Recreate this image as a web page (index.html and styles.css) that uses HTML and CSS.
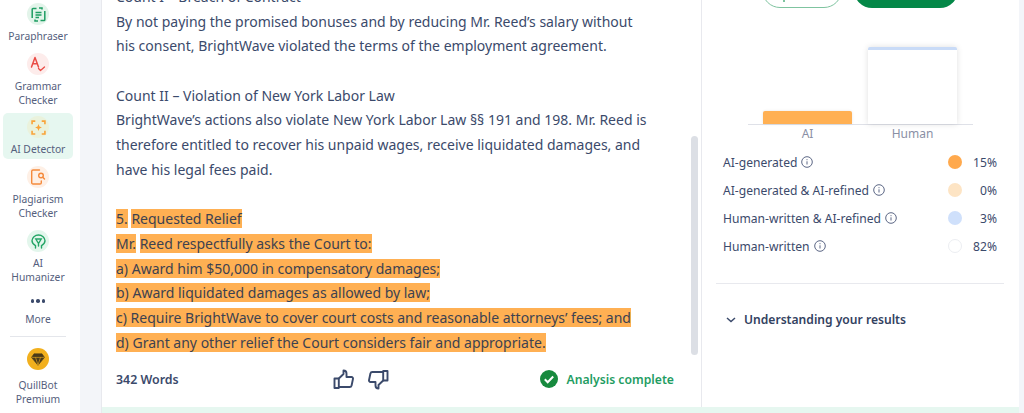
FILE: index.html
```html
<!DOCTYPE html>
<html>
<head>
    <title>AI Detector</title>
    <link rel="stylesheet" href="styles.css">
</head>
<body>
    <div class="app">
        <nav class="sidebar">
            <a class="nav-item first">
                <span class="nav-icon green">
                    <svg width="15" height="15" viewBox="0 0 15 15" fill="none" stroke="#1f9d63" stroke-width="1.500">
                        <path d="M5.500 1.500H2a.8.8 0 0 0-.8.8v8.700M9.500 13.500H13a.8.8 0 0 0 .8-.8V4"/>
                        <path d="M4 12.500v1.500h3M11 2.500V1H8"/>
                        <path d="M4.500 5.500h6M4.500 8h6M4.500 10.500h3.500" stroke-width="1.300"/>
                    </svg>
                </span>
                <span class="nav-label">Paraphraser</span>
            </a>
            <a class="nav-item">
                <span class="nav-icon red">
                    <svg width="16" height="16" viewBox="0 0 16 16" fill="none" stroke="#ea4c46" stroke-width="1.5" stroke-linecap="round" stroke-linejoin="round">
                        <path d="M1.5 11 5 1.5 8.500 11M2.800 7.800h4.400"/>
                        <path d="M8.500 12.500l2 2 4-3.500" stroke-width="1.300"/>
                    </svg>
                </span>
                <span class="nav-label">Grammar<br>Checker</span>
            </a>
            <a class="nav-item active">
                <span class="nav-icon amber">
                    <svg width="15" height="15" viewBox="0 0 14 14" fill="none" stroke="#f9a339" stroke-width="1.500">
                        <path d="M1 4V1h3M10 1h3v3M13 10v3h-3M4 13H1v-3"/>
                        <path d="M7 3.800 7.900 6.100 10.200 7 7.900 7.900 7 10.200 6.100 7.900 3.800 7 6.100 6.100Z" fill="#f9a339" stroke="none"/>
                    </svg>
                </span>
                <span class="nav-label">AI Detector</span>
            </a>
            <a class="nav-item">
                <span class="nav-icon orange">
                    <svg width="16" height="16" viewBox="0 0 16 16" fill="none" stroke="#f58a3c" stroke-width="1.4" stroke-linecap="round">
                        <path d="M9.500 1H3a1.300 1.300 0 0 0-1.300 1.300v11.400A1.300 1.300 0 0 0 3 15h7a1.300 1.300 0 0 0 1.300-1.300V12"/>
                        <circle cx="11" cy="6.500" r="2.300"/>
                        <path d="M12.800 8.300l1.700 1.700"/>
                    </svg>
                </span>
                <span class="nav-label">Plagiarism<br>Checker</span>
            </a>
            <a class="nav-item">
                <span class="nav-icon mint">
                    <svg width="15" height="15" viewBox="0 0 15 15" fill="none" stroke="#23a566" stroke-width="1.4" stroke-linecap="round">
                        <path d="M4.500 14v-2.300C2.500 10.500 1 8.800 1 6.800 1 3.500 4 1 7.500 1S14 3.500 14 6.800c0 2-1.500 3.700-3.500 4.900V14"/>
                        <path d="M4.800 5h5.400L7.500 9.500ZM7.500 9.500V12"/>
                    </svg>
                </span>
                <span class="nav-label">AI<br>Humanizer</span>
            </a>
            <a class="nav-item more">
                <span class="more-dots"><i></i><i></i><i></i></span>
                <span class="nav-label">More</span>
            </a>
            <div class="nav-divider"></div>
            <a class="nav-item premium">
                <span class="nav-icon gold">
                    <svg width="14" height="13" viewBox="0 0 14 13" fill="#4a3a1a" stroke="#4a3a1a" stroke-width=".6" stroke-linejoin="round">
                        <path d="M3 .8h8l2.500 3.600L7 12.300.5 4.400Z"/>
                        <path d="M.8 4.400h12.400M4.500 4.400 7 12M9.500 4.400 7 12" stroke="#f2b01e"/>
                    </svg>
                </span>
                <span class="nav-label">QuillBot<br>Premium</span>
            </a>
        </nav>

        <div class="main">
            <div class="card">
                <div class="card-body">
                    <section class="editor">
                        <div class="editor-text">
                            <p>Count I – Breach of Contract<br>
                            By not paying the promised bonuses and by reducing Mr. Reed’s salary without<br>
                            his consent, BrightWave violated the terms of the employment agreement.</p>
                            <p>Count II – Violation of New York Labor Law<br>
                            BrightWave’s actions also violate New York Labor Law §§ 191 and 198. Mr. Reed is<br>
                            therefore entitled to recover his unpaid wages, receive liquidated damages, and<br>
                            have his legal fees paid.</p>
                            <p class="flagged"><mark>5.</mark> <mark>Requested Relief</mark><br>
                            <mark>Mr.</mark> <mark>Reed respectfully asks the Court to:</mark><br>
                            <mark>a) Award him $50,000 in compensatory damages;</mark><br>
                            <mark>b) Award liquidated damages as allowed by law;</mark><br>
                            <mark>c) Require BrightWave to cover court costs and reasonable attorneys’ fees; and</mark><br>
                            <mark>d) Grant any other relief the Court considers fair and appropriate.</mark></p>
                        </div>
                        <div class="scroll-thumb"></div>
                        <div class="editor-footer">
                            <span class="word-count">342 Words</span>
                            <span class="feedback">
                                <svg width="21" height="21" viewBox="0 0 21 21" fill="none" stroke="#3b4a6b" stroke-width="1.900" stroke-linejoin="round">
                                    <path d="M1.500 9.500h4.300v9.500H1.500Z"/>
                                    <path d="M5.800 9.500 10.500 5V1.500c2 0 3 1.300 3 3v3.500h5a1.500 1.500 0 0 1 1.500 1.800l-1.400 6.700a2 2 0 0 1-2 1.500H5.800"/>
                                </svg>
                                <svg width="21" height="21" viewBox="0 0 21 21" fill="none" stroke="#3b4a6b" stroke-width="1.900" stroke-linejoin="round">
                                    <path d="M19.500 11.500h-4.300V2h4.300Z"/>
                                    <path d="M15.200 11.500 10.500 16v3.500c-2 0-3-1.300-3-3V13h-5A1.500 1.500 0 0 1 1 11.200L2.400 4.500a2 2 0 0 1 2-1.500h10.800"/>
                                </svg>
                            </span>
                            <span class="status">
                                <svg width="18" height="18" viewBox="0 0 18 18">
                                    <circle cx="9" cy="9" r="9" fill="#178a3e"/>
                                    <path d="M4.800 9.300l2.900 2.900 5.500-5.700" fill="none" stroke="#fff" stroke-width="2"/>
                                </svg>
                                Analysis complete
                            </span>
                        </div>
                    </section>

                    <aside class="results">
                        <div class="actions">
                            <button class="btn btn-outline"></button>
                            <button class="btn btn-solid"></button>
                        </div>
                        <div class="chart">
                            <div class="bars">
                                <div class="bar bar-ai"></div>
                                <div class="bar bar-human"></div>
                            </div>
                            <div class="bar-labels">
                                <span>AI</span>
                                <span>Human</span>
                            </div>
                        </div>
                        <ul class="legend">
                            <li>
                                <span class="legend-name">AI-generated <svg class="info" viewBox="0 0 12 12"><circle cx="6" cy="6" r="5.300"/><path d="M6 5.300v3.200M6 3.200v1"/></svg></span>
                                <span class="dot dot-ai"></span><span class="pct">15%</span>
                            </li>
                            <li>
                                <span class="legend-name">AI-generated &amp; AI-refined <svg class="info" viewBox="0 0 12 12"><circle cx="6" cy="6" r="5.300"/><path d="M6 5.300v3.200M6 3.200v1"/></svg></span>
                                <span class="dot dot-refined"></span><span class="pct">0%</span>
                            </li>
                            <li>
                                <span class="legend-name">Human-written &amp; AI-refined <svg class="info" viewBox="0 0 12 12"><circle cx="6" cy="6" r="5.300"/><path d="M6 5.300v3.200M6 3.200v1"/></svg></span>
                                <span class="dot dot-human-refined"></span><span class="pct">3%</span>
                            </li>
                            <li>
                                <span class="legend-name">Human-written <svg class="info" viewBox="0 0 12 12"><circle cx="6" cy="6" r="5.300"/><path d="M6 5.300v3.200M6 3.200v1"/></svg></span>
                                <span class="dot dot-human"></span><span class="pct">82%</span>
                            </li>
                        </ul>
                        <div class="results-rule"></div>
                        <div class="understanding">
                            <svg width="10" height="6" viewBox="0 0 10 6" fill="none" stroke="#3b4a6b" stroke-width="1.500"><path d="M1 1l4 3.500L9 1"/></svg>
                            Understanding your results
                        </div>
                    </aside>
                </div>
                <div class="card-strip"></div>
            </div>
        </div>
    </div>
</body>
</html>
```

FILE: styles.css
```css
html, body {
    margin: 0;
    padding: 0;
    height: 413px;
    overflow: hidden;
    background: #fff;
    font-family: 'Noto Sans', 'Open Sans', sans-serif;
    color: #3b4a6b;
}

.app {
    display: flex;
    height: 413px;
    overflow: hidden;
}

/* left nav */
.sidebar {
    width: 80px;
    flex-shrink: 0;
    box-sizing: border-box;
    padding-right: 4px;
    background: #fff;
    display: flex;
    flex-direction: column;
    align-items: center;
}

.nav-item {
    width: 70px;
    flex-shrink: 0;
    display: flex;
    flex-direction: column;
    align-items: center;
    margin-bottom: 10px;
    border-radius: 5px;
}

.nav-item.first {
    margin-top: 3px;
}

.nav-item.active {
    background: #e6f7f0;
    padding: 3px 0;
    margin-top: -4px;
    margin-bottom: 7px;
}

.nav-icon {
    width: 22px;
    height: 22px;
    border-radius: 50%;
    display: flex;
    align-items: center;
    justify-content: center;
    margin-bottom: 4px;
}

.green { background: #e3f4ea; }
.red { background: #fdeceb; }
.amber { background: #eaf2dc; }
.orange { background: #fef0e6; }
.mint { background: #e3f6ec; }
.gold { background: #f2b01e; }

.nav-label {
    font-size: 10.300px;
    line-height: 14px;
    text-align: center;
    color: #55607d;
}

.more {
    margin-top: 5px;
}

.more-dots {
    display: flex;
    gap: 2px;
    height: 4px;
    margin-bottom: 9px;
}

.more-dots i {
    width: 3.500px;
    height: 3.500px;
    border-radius: 50%;
    background: #3b4a6b;
}

.nav-divider {
    width: 56px;
    height: 1px;
    flex-shrink: 0;
    background: #e4e6eb;
    margin: 0 0 11px;
}

.premium .nav-icon {
    margin-bottom: 8px;
}

/* main card */
.main {
    flex: 1;
    background: #f3f5f9;
    padding: 0 5px 0 21px;
    min-width: 0;
}

.card {
    height: 413px;
    background: #fff;
    border-left: 1px solid #e8e9ee;
    box-sizing: border-box;
    display: flex;
    flex-direction: column;
}

.card-body {
    flex: 1;
    display: flex;
    min-height: 0;
}

.card-strip {
    height: 6px;
    background: #e6f7f0;
}

.editor {
    width: 599px;
    flex-shrink: 0;
    position: relative;
    padding: 0 0 0 14px;
    box-sizing: border-box;
    display: flex;
    flex-direction: column;
    overflow: hidden;
}

.editor-text {
    flex: 1 1 0;
    min-height: 0;
    margin-top: -15px;
    font-size: 14px;
    line-height: 24.680px;
    color: #3b4a6b;
}

.editor-text p {
    margin: 0 0 24.680px;
}

.flagged {
    color: #3d4250;
}

mark {
    background: #ffb053;
    color: inherit;
}

.scroll-thumb {
    position: absolute;
    top: 136px;
    right: 3px;
    width: 7px;
    height: 219px;
    border-radius: 4px;
    background: #dcdfe5;
}

.editor-footer {
    display: flex;
    align-items: center;
    height: 56px;
    padding-right: 27px;
    flex-shrink: 0;
}

.word-count {
    font-size: 12.400px;
    font-weight: 600;
    width: 217px;
}

.feedback {
    display: flex;
    gap: 14px;
}

.status {
    margin-left: auto;
    display: flex;
    align-items: center;
    gap: 9px;
    font-size: 12.200px;
    font-weight: 600;
    color: #1f9d63;
}

/* results column */
.results {
    flex: 1;
    border-left: 1px solid #e8e9ee;
    min-width: 0;
    display: flex;
    flex-direction: column;
}

.actions {
    display: flex;
    gap: 12px;
    margin-top: -28px;
    padding-left: 60px;
}

.btn {
    height: 36px;
    border-radius: 18px;
    cursor: pointer;
}

.btn-outline {
    width: 80px;
    position: relative;
    background: #fff;
    border: 1px solid #7fc4a0;
}

/* tail of the button label that shows below the fold line */
.btn-outline::after {
    content: "";
    position: absolute;
    left: 20px;
    top: 27px;
    width: 2px;
    height: 2px;
    background: #7fc4a0;
}

.btn-solid {
    width: 104px;
    background: #048848;
    border: none;
}

.chart {
    width: 225px;
    margin: 39px 0 0 46px;
}

.bars {
    display: flex;
    align-items: flex-end;
    gap: 16px;
    height: 77px;
    padding-left: 15px;
    border-bottom: 1px solid #dfe1e8;
}

.bar {
    width: 89px;
    box-sizing: border-box;
    border-radius: 2px 2px 0 0;
}

.bar-ai {
    height: 13px;
    background: #ffb053;
    box-shadow: 0 0 3px rgba(0, 0, 0, 0.1);
}

.bar-human {
    height: 77px;
    background: #fff;
    border-top: 3px solid #c9dbf7;
    box-shadow: 0 0 6px rgba(0, 0, 0, 0.13);
}

.bar-labels {
    display: flex;
    gap: 16px;
    padding-left: 15px;
    font-size: 12px;
    line-height: 17px;
    color: #8a90a5;
}

.bar-labels span {
    width: 89px;
    text-align: center;
}

.legend {
    list-style: none;
    margin: 6px 0 0;
    padding: 0 22px 0 21px;
}

.legend li {
    display: flex;
    align-items: center;
    height: 28px;
    font-size: 12.100px;
}

.legend-name {
    flex: 1;
    display: flex;
    align-items: center;
    gap: 4px;
}

.info {
    width: 12px;
    height: 12px;
    fill: none;
    stroke: #5c6785;
    stroke-width: 1;
}

.dot {
    width: 14px;
    height: 14px;
    border-radius: 50%;
    box-sizing: border-box;
}

.dot-ai { background: #ffa94d; }
.dot-refined { background: #fde4c4; }
.dot-human-refined { background: #cfe0fb; }
.dot-human { background: #fff; border: 1px solid #eceef2; }

.pct {
    width: 35px;
    text-align: right;
}

.results-rule {
    height: 1px;
    background: #e8e9ee;
    margin: 23px 15px 0 14px;
}

.understanding {
    display: flex;
    align-items: center;
    gap: 8px;
    margin: 27px 0 0 24px;
    font-size: 12.100px;
    font-weight: 600;
    line-height: 18px;
    color: #33425f;
}
```
